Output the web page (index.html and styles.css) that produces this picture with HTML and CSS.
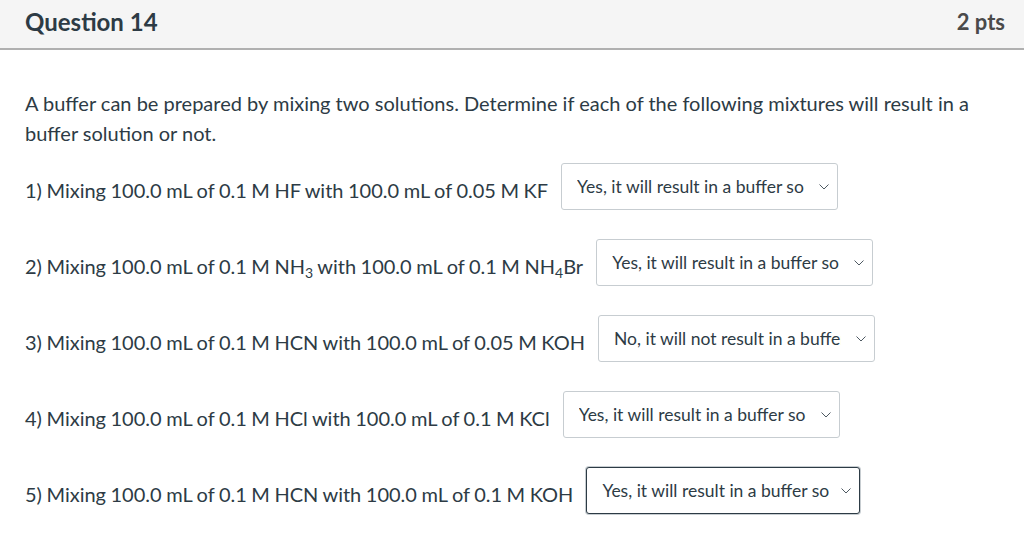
FILE: index.html
```html
<!DOCTYPE html>
<html>
<head>
<meta charset="utf-8">
<link rel="stylesheet" href="styles.css">
</head>
<body>
<div class="question">
  <div class="header">
    <span class="title">Question 14</span>
    <span class="pts">2 pts</span>
  </div>
  <div class="content">
    <p class="intro">A buffer can be prepared by mixing two solutions. Determine if each of the following mixtures will result in a buffer solution or not.</p>
    <div class="row"><span class="label">1) Mixing 100.0 mL of 0.1 M HF with 100.0 mL of 0.05 M KF</span><span class="select"><span class="val">Yes, it will result in a buffer solution</span><svg class="chev" viewBox="0 0 10 6"><path d="M0.5 0.5 L5 5 L9.5 0.5" fill="none" stroke="#3a4650" stroke-width="0.9"/></svg></span></div>
    <div class="row"><span class="label">2) Mixing 100.0 mL of 0.1 M NH<sub>3</sub> with 100.0 mL of 0.1 M NH<sub>4</sub>Br</span><span class="select"><span class="val">Yes, it will result in a buffer solution</span><svg class="chev" viewBox="0 0 10 6"><path d="M0.5 0.5 L5 5 L9.5 0.5" fill="none" stroke="#3a4650" stroke-width="0.9"/></svg></span></div>
    <div class="row"><span class="label">3) Mixing 100.0 mL of 0.1 M HCN with 100.0 mL of 0.05 M KOH</span><span class="select"><span class="val">No, it will not result in a buffer solution</span><svg class="chev" viewBox="0 0 10 6"><path d="M0.5 0.5 L5 5 L9.5 0.5" fill="none" stroke="#3a4650" stroke-width="0.9"/></svg></span></div>
    <div class="row"><span class="label">4) Mixing 100.0 mL of 0.1 M HCl with 100.0 mL of 0.1 M KCl</span><span class="select"><span class="val">Yes, it will result in a buffer solution</span><svg class="chev" viewBox="0 0 10 6"><path d="M0.5 0.5 L5 5 L9.5 0.5" fill="none" stroke="#3a4650" stroke-width="0.9"/></svg></span></div>
    <div class="row"><span class="label">5) Mixing 100.0 mL of 0.1 M HCN with 100.0 mL of 0.1 M KOH</span><span class="select focused"><span class="val">Yes, it will result in a buffer solution</span><svg class="chev" viewBox="0 0 10 6"><path d="M0.5 0.5 L5 5 L9.5 0.5" fill="none" stroke="#3a4650" stroke-width="0.9"/></svg></span></div>
  </div>
</div>
</body>
</html>
```
FILE: styles.css
```css
html, body {
  margin: 0;
  padding: 0;
  background: #ffffff;
}
body {
  font-family: Lato, "Liberation Sans", sans-serif;
  color: #2d3b45;
}
.header {
  display: flex;
  justify-content: space-between;
  align-items: center;
  height: 48px;
  background: #f5f5f5;
  border-bottom: 2px solid #b0b0b0;
  padding: 0 19px 0 25px;
}
.title {
  font-size: 24px;
  font-weight: bold;
  color: #2d3b45;
  margin-top: -6px;
}
.pts {
  font-size: 22px;
  font-weight: bold;
  color: #4a4a4a;
  margin-top: -6px;
}
.content {
  padding: 38px 25px 0 25px;
}
.intro {
  margin: 0 0 15px 0;
  font-size: 20px;
  line-height: 30px;
}
.row {
  display: flex;
  align-items: center;
  height: 47px;
  margin-bottom: 29px;
  font-size: 20px;
}
.label {
  margin-top: 6px;
  white-space: nowrap;
  word-spacing: -0.6px;
}
.label sub {
  font-size: 14px;
  vertical-align: -4px;
  line-height: 0;
}
.select {
  flex: none;
  margin-left: 13px;
  box-sizing: border-box;
  width: 277px;
  height: 47px;
  border: 1px solid #c7cdd1;
  border-radius: 3px;
  display: flex;
  align-items: center;
  padding: 0 8px 0 15px;
  background: #fff;
}
.select.focused {
  border: 1px solid #2d3b45;
  box-shadow: 0 0 0 1px #c7cdd1;
  width: 274px;
}
.val {
  font-size: 17.5px;
  white-space: nowrap;
  overflow: hidden;
  width: 227px;
  flex: none;
  margin-top: -1px;
}
.chev {
  width: 10px;
  height: 6px;
  margin-left: auto;
}
```
